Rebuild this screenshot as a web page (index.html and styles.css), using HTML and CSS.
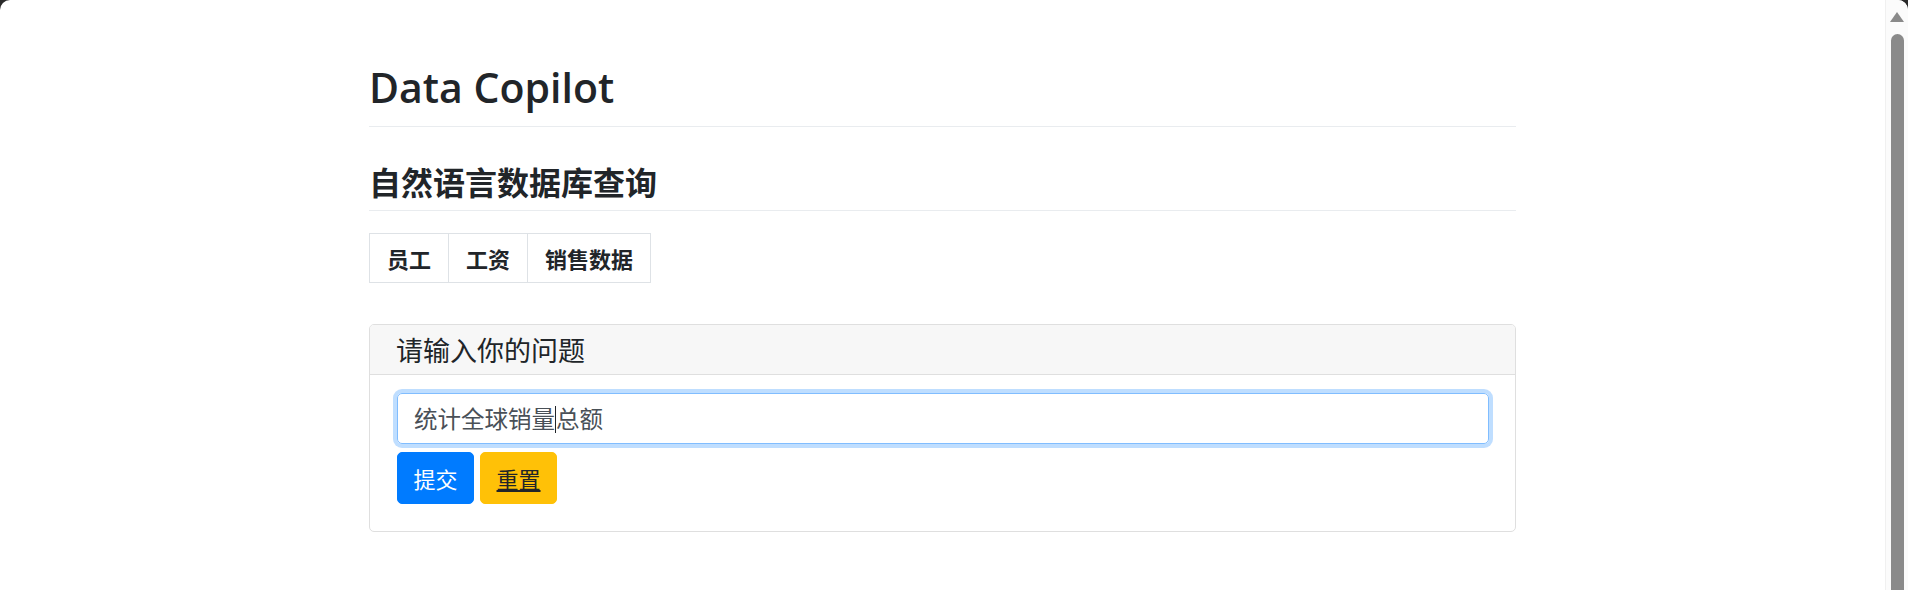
FILE: index.html
```html
<!DOCTYPE html>
<html lang="zh-CN">
<head>
<meta charset="utf-8">
<title>Data Copilot</title>
<link rel="stylesheet" href="styles.css">
</head>
<body>
<div class="window">
  <main class="main">
    <div class="container">
      <h1 class="title">Data Copilot</h1>
      <h2 class="subtitle">自然语言数据库查询</h2>
      <div class="tabs">
        <div class="tab">员工</div>
        <div class="tab">工资</div>
        <div class="tab">销售数据</div>
      </div>
      <section class="card">
        <div class="card-header">请输入你的问题</div>
        <div class="card-body">
          <div class="input" role="textbox">统计全球销量<span class="caret"></span>总额</div>
          <div class="actions">
            <button class="btn btn-primary" type="button">提交</button>
            <button class="btn btn-warning" type="button">重置</button>
          </div>
        </div>
      </section>
    </div>
  </main>
  <div class="scrollbar">
    <div class="arrow"></div>
    <div class="thumb"></div>
  </div>
</div>
</body>
</html>
```
FILE: styles.css
```css
html {
  background: #2a2a2a;
}
body {
  margin: 0;
  font-family: "Open Sans", "Noto Sans CJK SC", sans-serif;
  color: #212529;
}
.window {
  display: flex;
  height: 590px;
  background: #ffffff;
  border-radius: 10px 10px 0 0;
  overflow: hidden;
}
.main {
  flex: 1;
}
.container {
  width: 1147px;
  margin: 0 auto;
  padding-top: 63px;
}
.title {
  margin: 0;
  font-size: 41px;
  font-weight: 600;
  line-height: 48px;
  padding-bottom: 15px;
  border-bottom: 1px solid #e9ecef;
}
.subtitle {
  margin: 36px 0 0;
  font-family: "Noto Sans CJK SC", sans-serif;
  font-size: 32px;
  font-weight: 700;
  line-height: 36px;
  padding-bottom: 11px;
  border-bottom: 1px solid #e9ecef;
}
.tabs {
  display: inline-flex;
  margin-top: 22px;
  border: 1px solid #dee2e6;
}
.tab {
  font-family: "Noto Sans CJK SC", sans-serif;
  font-size: 22px;
  font-weight: 700;
  line-height: 48px;
  padding: 0 17px;
}
.tab + .tab {
  border-left: 1px solid #dee2e6;
}
.card {
  margin-top: 41px;
  border: 1px solid #dfdfdf;
  border-radius: 5px;
  overflow: hidden;
}
.card-header {
  background: #f7f7f7;
  border-bottom: 1px solid #dfdfdf;
  padding: 0 26px;
  font-family: "Noto Sans CJK SC", sans-serif;
  font-size: 27px;
  line-height: 49px;
}
.card-body {
  padding: 18px 26px 27px 27px;
}
.input {
  height: 51px;
  box-sizing: border-box;
  border: 1px solid #80bdff;
  border-radius: 5px;
  box-shadow: 0 0 0 4px rgba(0, 123, 255, 0.25);
  padding: 0 16px;
  font-family: "Noto Sans CJK SC", sans-serif;
  font-size: 23.5px;
  line-height: 49px;
  color: #495057;
}
.caret {
  display: inline-block;
  width: 1px;
  height: 27px;
  background: #212529;
  vertical-align: -5px;
}
.actions {
  display: flex;
  gap: 6px;
  margin-top: 8px;
}
.btn {
  font-family: "Noto Sans CJK SC", sans-serif;
  font-size: 22px;
  line-height: 50px;
  padding: 0 15.5px;
  border: 1px solid transparent;
  border-radius: 5px;
  cursor: pointer;
}
.btn-primary {
  background: #007bff;
  border-color: #007bff;
  color: #ffffff;
}
.btn-warning {
  background: #ffc107;
  border-color: #ffc107;
  color: #212529;
  text-decoration: underline;
}
.scrollbar {
  width: 23px;
  background: #fbfbfb;
  border-left: 1px solid #f0f0f0;
  box-sizing: border-box;
  display: flex;
  flex-direction: column;
  align-items: center;
}
.arrow {
  margin-top: 12px;
  width: 0;
  height: 0;
  border-left: 7px solid transparent;
  border-right: 7px solid transparent;
  border-bottom: 10px solid #8a8a8a;
}
.thumb {
  margin-top: 12px;
  width: 13px;
  flex: 1;
  background: #8a8a8a;
  border-radius: 7px 7px 0 0;
  margin-bottom: -10px;
}
```
